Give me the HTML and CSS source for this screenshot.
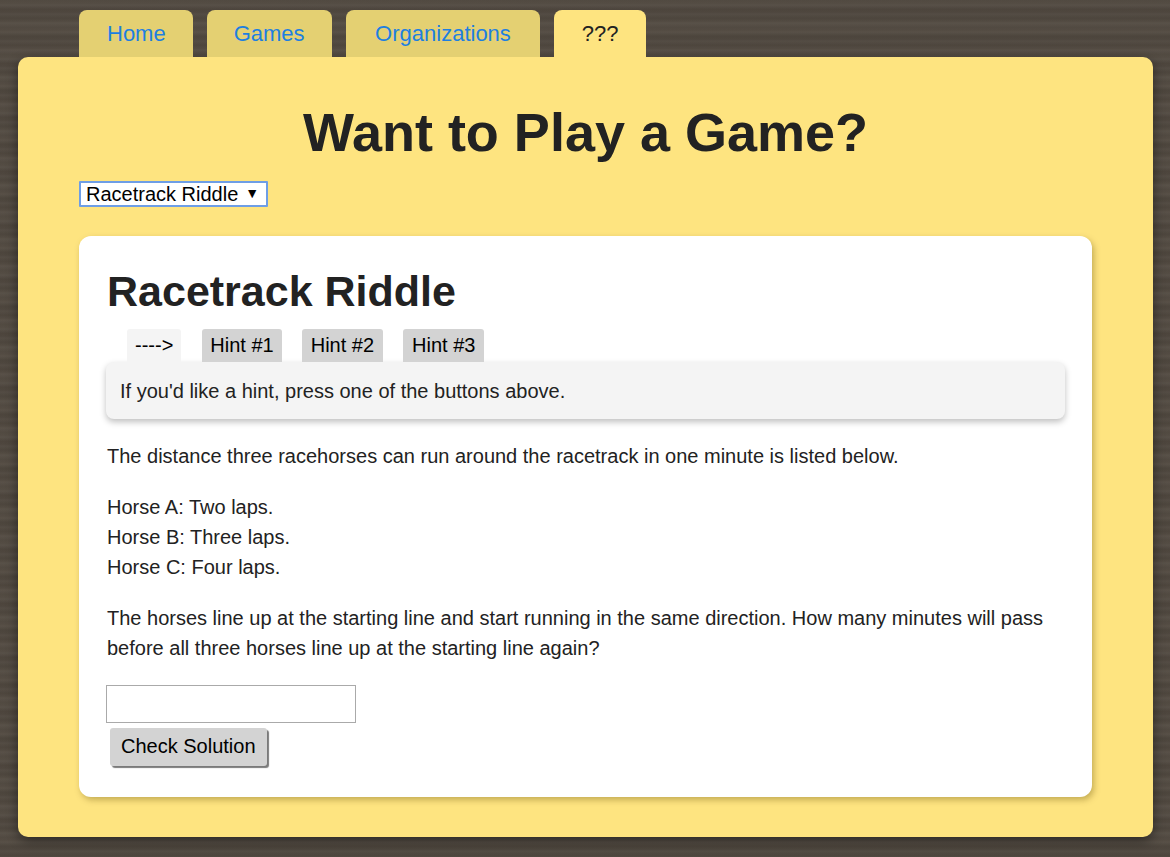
FILE: index.html
```html
<!DOCTYPE html>
<html lang="en">
<head>
<meta charset="utf-8">
<title>Want to Play a Game?</title>
<link rel="stylesheet" href="styles.css">
</head>
<body>
<div class="page">
  <nav class="tabs">
    <a class="tab tab-home" href="#">Home</a>
    <a class="tab" href="#">Games</a>
    <a class="tab tab-wide" href="#">Organizations</a>
    <span class="tab tab-active">???</span>
  </nav>
  <main class="panel">
    <h1 class="title">Want to Play a Game?</h1>
    <div class="select-wrap">
      <select class="game-select">
        <option>Racetrack Riddle</option>
      </select>
    </div>
    <section class="card">
      <h2 class="card-title">Racetrack Riddle</h2>
      <div class="hint-tabs">
        <span class="hint-tab hint-tab-active">----&gt;</span>
        <button class="hint-tab">Hint #1</button>
        <button class="hint-tab hint-tab-mid">Hint #2</button>
        <button class="hint-tab hint-tab-last">Hint #3</button>
      </div>
      <div class="hint-box">If you'd like a hint, press one of the buttons above.</div>
      <p class="text">The distance three racehorses can run around the racetrack in one minute is listed below.</p>
      <p class="text">Horse A: Two laps.<br>Horse B: Three laps.<br>Horse C: Four laps.</p>
      <p class="text">The horses line up at the starting line and start running in the same direction. How many minutes will pass before all three horses line up at the starting line again?</p>
      <input class="answer" type="text">
      <button class="check">Check Solution</button>
    </section>
  </main>
</div>
</body>
</html>
```

FILE: styles.css
```css
html, body {
  margin: 0;
  padding: 0;
}

body {
  font-family: "Liberation Sans", Arial, sans-serif;
  color: #222;
  background-color: #524a41;
  background-image:
    repeating-linear-gradient(180deg, rgba(0,0,0,0.05) 0px, rgba(0,0,0,0) 3px, rgba(255,255,255,0.03) 5px, rgba(0,0,0,0.04) 9px),
    repeating-linear-gradient(180deg, rgba(255,255,255,0.02) 0px, rgba(0,0,0,0.05) 13px, rgba(255,255,255,0.02) 27px);
  min-height: 857px;
}

.page {
  padding: 10px 17px 20px 18px;
}

.tabs {
  display: flex;
  gap: 14px;
  margin-left: 61px;
  height: 47px;
}

.tab {
  display: block;
  height: 47px;
  line-height: 47px;
  padding: 0 27px;
  font-size: 22px;
  background: #e4d072;
  color: #1e7fe0;
  text-decoration: none;
  border-radius: 8px 8px 0 0;
}

.tab-home {
  padding: 0 27px 0 28px;
}

.tab-wide {
  padding: 0 29.5px;
}

.tab-active {
  background: #fee480;
  color: #222;
  padding: 0 27.5px;
}

.panel {
  background: #fee480;
  border-radius: 10px;
  padding: 44px 61px 40px;
  box-shadow: 0 4px 12px rgba(0, 0, 0, 0.45);
}

.title {
  margin: 0;
  text-align: center;
  font-size: 54px;
  line-height: 1.15;
  font-weight: bold;
}

.select-wrap {
  position: relative;
  width: 189px;
  margin-top: 18px;
}

.game-select {
  appearance: none;
  -webkit-appearance: none;
  display: block;
  width: 189px;
  height: 26px;
  box-sizing: border-box;
  border: 2px solid #6e9ee6;
  border-radius: 1px;
  background: #fff;
  color: #000;
  font-family: "Liberation Sans", Arial, sans-serif;
  font-size: 20px;
  padding: 0 0 0 5px;
  line-height: 22px;
}

.select-wrap::after {
  content: "\25BC";
  position: absolute;
  right: 9px;
  top: 4px;
  font-size: 14px;
  color: #000;
  pointer-events: none;
}

.card {
  margin-top: 29px;
  background: #fff;
  border-radius: 12px;
  padding: 31px 27px 31px 28px;
  box-shadow: 2px 3px 6px rgba(90, 70, 0, 0.35);
}

.card-title {
  margin: 0;
  font-size: 43px;
  line-height: 1.15;
  font-weight: bold;
}

.hint-tabs {
  display: flex;
  gap: 20px;
  margin-top: 12px;
  padding-left: 20px;
}

.hint-tab {
  display: block;
  font-family: "Liberation Sans", Arial, sans-serif;
  font-size: 20px;
  line-height: 23px;
  padding: 5px 8px;
  background: #d3d3d3;
  color: #000;
  border: none;
  border-radius: 3px 3px 0 0;
  margin: 0;
}

.hint-tab-active {
  background: #f4f4f4;
  padding: 5px 8px;
}

.hint-tab-active + .hint-tab {
  margin-left: 1px;
}

.hint-tab-mid {
  padding: 5px 9px;
}

.hint-tab-last {
  padding: 5px 9px;
}

.hint-box {
  margin-left: -1px;
  width: 959px;
  box-sizing: border-box;
  background: #f4f4f4;
  border-radius: 8px;
  padding: 14px 14px 13px;
  font-size: 20px;
  line-height: 30px;
  box-shadow: 0 3px 6px rgba(0, 0, 0, 0.25);
  margin-bottom: 22px;
}

.text {
  margin: 0 0 21px;
  font-size: 20px;
  line-height: 30px;
}

.answer {
  display: block;
  margin: 22px 0 0 -1px;
  width: 250px;
  height: 38px;
  box-sizing: border-box;
  border: 1px solid #aaa;
  background: #fff;
  font-size: 20px;
}

.check {
  display: block;
  margin: 5px 0 0 3px;
  height: 38px;
  padding: 0 11px;
  font-family: "Liberation Sans", Arial, sans-serif;
  font-size: 20px;
  color: #000;
  background: #d3d3d3;
  border: none;
  border-radius: 3px;
  box-shadow: 2px 2px 1px #7a7a7a;
}
```
